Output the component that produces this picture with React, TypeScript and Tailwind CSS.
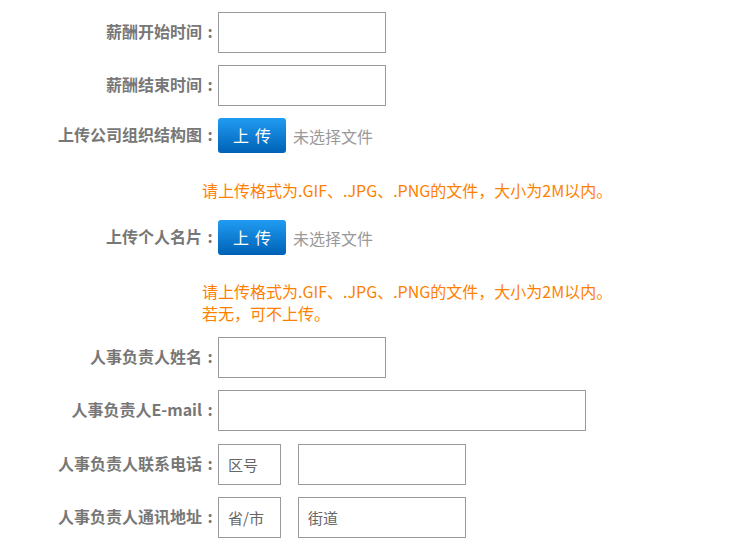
import React from 'react';

const labelCls =
  "w-[218px] shrink-0 text-right text-[16px] font-bold text-[#777] leading-[20px] pb-[4px]";
const inputCls =
  "h-[41px] border border-[#9a9a9a] bg-white px-[9px] text-[15px] text-[#555] outline-none placeholder:text-[#666]";
const hintCls =
  "pl-[202px] text-[16px] leading-[22px] text-[#ff7f00] [text-spacing-trim:space-all]";

function Row({ label, children, className = "" }: { label: string; children: React.ReactNode; className?: string }) {
  return (
    <div className={`flex items-center ${className}`}>
      <label className={labelCls}>
        {label}
        <span className="inline-block w-[16px] text-center">:</span>
      </label>
      {children}
    </div>
  );
}

function UploadButton() {
  return (
    <>
      <button className="w-[68px] h-[35px] rounded-[3px] bg-gradient-to-b from-[#209cf2] to-[#0062b6] text-white text-[16px] leading-[35px] shrink-0">
        <span>上</span>
        <span className="ml-[6px]">传</span>
      </button>
      <span className="ml-[7px] text-[16px] text-[#999]">未选择文件</span>
    </>
  );
}

export default function App() {
  return (
    <div className="w-[756px] h-[545px] overflow-hidden bg-white pt-[12px] font-['Noto_Sans_CJK_SC','Noto_Sans',sans-serif]">
      {/* salary period */}
      <Row label="薪酬开始时间" className="mb-[12px]">
        <input className={`${inputCls} w-[168px]`} />
      </Row>
      <Row label="薪酬结束时间" className="mb-[12px]">
        <input className={`${inputCls} w-[168px]`} />
      </Row>

      {/* uploads */}
      <Row label="上传公司组织结构图" className="h-[35px]">
        <UploadButton />
      </Row>
      <div className={`mt-[26px] ${hintCls}`}>
        请上传格式为.GIF、.JPG、.PNG的文件，大小为2M以内。
      </div>

      <Row label="上传个人名片" className="h-[35px] mt-[19px]">
        <UploadButton />
      </Row>
      <div className={`mt-[25px] ${hintCls}`}>
        <p>请上传格式为.GIF、.JPG、.PNG的文件，大小为2M以内。</p>
        <p>若无，可不上传。</p>
      </div>

      {/* HR contact */}
      <Row label="人事负责人姓名" className="mt-[13px] mb-[12px]">
        <input className={`${inputCls} w-[168px]`} />
      </Row>
      <Row label="人事负责人E-mail" className="mb-[13px]">
        <input className={`${inputCls} w-[368px]`} />
      </Row>
      <Row label="人事负责人联系电话" className="mb-[12px]">
        <input className={`${inputCls} w-[63px]`} placeholder="区号" />
        <input className={`${inputCls} w-[168px] ml-[17px]`} />
      </Row>
      <Row label="人事负责人通讯地址">
        <input className={`${inputCls} w-[63px]`} placeholder="省/市" />
        <input className={`${inputCls} w-[168px] ml-[17px]`} placeholder="街道" />
      </Row>
    </div>
  );
}
